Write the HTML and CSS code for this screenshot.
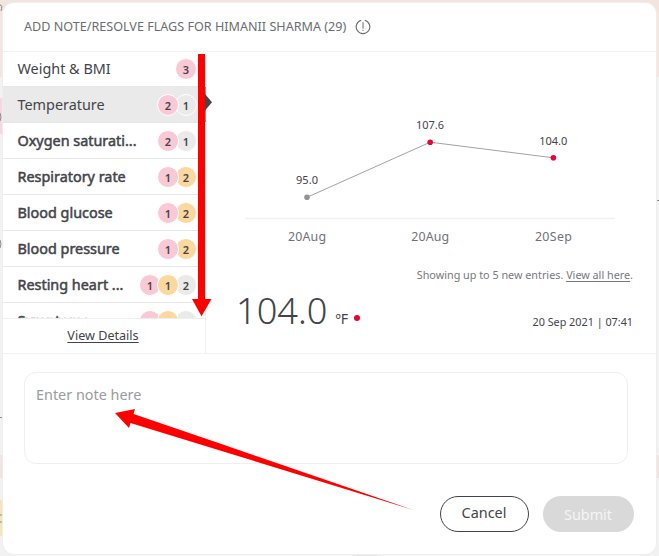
FILE: index.html
```html
<!DOCTYPE html>
<html lang="en">
<head>
<meta charset="utf-8">
<title>Add note</title>
<link rel="stylesheet" href="styles.css">
</head>
<body>
<svg class="backdrop" width="659" height="556" aria-hidden="true">
  <rect width="659" height="556" fill="#f2f2f2"/>
  <path d="M0 0H659V77H654V20H4V77H0Z" fill="#f4e4df"/>
  <path d="M0 98h3v36H0z" fill="#f9d5de"/>
  <path d="M0 455h3v23H0zM656 455h3v23h-3z" fill="#eee4e1"/>
  <path d="M0 500h3v36H0z" fill="#f7e2bd"/>
  <path d="M0 5q3 0 1 6M0 113q2 4 0 8M0 240q2 4 0 8M0 417.5h2M657 200.5h2M0 515h2M0 522h2" fill="none" stroke="#888" />
  <path d="M353 555h24v1h-24z" fill="#e8e8e8"/>
</svg>
<main class="modal">
  <header class="head">
    <h1 class="title">ADD NOTE/RESOLVE FLAGS FOR HIMANII SHARMA (29)</h1>
    <svg class="info" width="16" height="16" viewBox="0 0 16 16"><path d="M6.2 1.3A6.8 6.8 0 1 0 9.8 1.3" fill="none" stroke="#66686b" stroke-width="1.1"/><path d="M8 3.2v6.6M8 10.8v1.2" stroke="#77797c" stroke-width="1.1"/></svg>
  </header>
  <section class="body">
    <nav class="side">
      <ul class="list">
        <li class="row"><span class="name">Weight &amp; BMI</span><span class="badge pink">3</span></li>
        <li class="row active"><span class="name">Temperature</span><span class="badge pink">2</span><span class="badge gray">1</span></li>
        <li class="row unread"><span class="name">Oxygen saturati...</span><span class="badge pink">2</span><span class="badge gray">1</span></li>
        <li class="row unread"><span class="name">Respiratory rate</span><span class="badge pink">1</span><span class="badge amber">2</span></li>
        <li class="row unread"><span class="name">Blood glucose</span><span class="badge pink">1</span><span class="badge amber">2</span></li>
        <li class="row unread"><span class="name">Blood pressure</span><span class="badge pink">1</span><span class="badge amber">2</span></li>
        <li class="row unread"><span class="name">Resting heart ...</span><span class="badge pink">1</span><span class="badge amber">1</span><span class="badge gray">2</span></li>
        <li class="row unread"><span class="name">Symptoms</span><span class="badge pink"></span><span class="badge amber"></span><span class="badge gray"></span></li>
      </ul>
      <div class="details"><a>View Details</a></div>
    </nav>
    <div class="panel">
      <svg class="chart" width="450" height="206" viewBox="206 52 450 206">
        <path d="M245 218.5H615" stroke="#f0f0f0" stroke-width="1.3"/>
        <path d="M307 197.3L430.2 142.2L553.4 157.8" fill="none" stroke="#a2a2a5" stroke-width="1"/>
        <circle cx="307" cy="197.3" r="2.8" fill="#929499"/>
        <circle cx="430.2" cy="142.2" r="2.8" fill="#eb0037"/>
        <circle cx="553.4" cy="157.8" r="2.8" fill="#eb0037"/>
        <g class="value"><text x="307" y="184" textLength="22">95.0</text><text x="430" y="129" textLength="28">107.6</text><text x="553.2" y="145" textLength="28">104.0</text></g>
        <g class="axis"><text x="307" y="241" textLength="38">20Aug</text><text x="430.2" y="241" textLength="38">20Aug</text><text x="553.4" y="241" textLength="37">20Sep</text></g>
      </svg>
      <p class="hint">Showing up to 5 new entries. <a>View all here</a>.</p>
      <div class="reading">
        <span class="number">104.0</span><span class="unit">ºF</span><i class="dot"></i>
        <time class="time">20 Sep 2021 | 07:41</time>
      </div>
    </div>
  </section>
  <section class="foot">
    <div class="note">Enter note here</div>
    <div class="actions"><button class="btn cancel">Cancel</button><button class="btn submit">Submit</button></div>
  </section>
</main>
<svg class="marks" width="659" height="556" aria-hidden="true">
  <path d="M205.5 87V122" stroke="#909194"/>
  <path d="M205 94L212 102.3L205 110.5Z" fill="#434547"/>
  <path d="M198 54H205V299H211.5L201.5 316.3L192 299H198Z" fill="#f00"/>
  <path d="M115 413L135 409L133.5 414L220 443.5L414 510.2L220 450.5L130.5 423L129 428Z" fill="#f00"/>
</svg>
</body>
</html>
```
FILE: styles.css
```css
* { box-sizing: border-box; }
body {
  margin: 0;
  width: 659px;
  height: 556px;
  overflow: hidden;
  font-family: "Noto Sans", sans-serif;
  color: #434449;
  background: #f2f2f2;
}
.backdrop, .marks { position: absolute; top: 0; left: 0; }
.modal {
  position: relative;
  display: flex;
  flex-direction: column;
  width: 653px;
  height: 551px;
  margin: 3px;
  border-radius: 11px;
  background: #fff;
  box-shadow: 0 0 1px 1px #eeeeee;
  overflow: hidden;
}
.head {
  display: flex;
  align-items: center;
  gap: 9px;
  height: 49px;
  padding: 0 0 0 21px;
  border-bottom: 1px solid #f2f2f2;
}
.title { margin: 0 0 2px; font-size: 12.6px; font-weight: 400; color: #6b6d70; white-space: nowrap; }
.body { display: flex; height: 302px; border-bottom: 1px solid #f2f2f2; }
.side { display: flex; flex-direction: column; width: 203px; border-right: 1px solid #efefef; }
.list { margin: 0; padding: 0; height: 266px; overflow: hidden; list-style: none; }
.row {
  display: flex;
  align-items: center;
  height: 36px;
  padding: 0 9px 0 14.5px;
  border-bottom: 1px solid #e7e7e7;
}
.row:first-child { height: 35px; }
.row.active { background: #eaeaea; }
.name { flex: 1; font-size: 14.4px; line-height: 20px; white-space: nowrap; }
.unread .name { -webkit-text-stroke: 0.5px #434449; }
.badge {
  width: 22px;
  height: 22px;
  margin-left: -4px;
  margin-top: 1px;
  border: 1px solid #fff;
  border-radius: 50%;
  font-size: 11px;
  font-weight: 600;
  line-height: 21px;
  text-align: center;
}
.row:first-child .badge { margin-top: 0; }
.badge:last-child { margin-right: -1px; }
.badge:not(:last-child) { z-index: 1; }
.pink { background: #fac9d6; }
.gray { background: #eaeaea; }
.amber { background: #fad89f; }
.details { flex: 1; border-top: 1px solid #eee; text-align: center; font-size: 12.6px; line-height: 33px; }
a { text-decoration: underline; text-underline-offset: 2px; }
.details a { margin-right: 2px; }
.panel { display: flex; flex-direction: column; width: 450px; }
.chart { display: block; flex: none; }
.value, .axis { text-anchor: middle; }
.value { font-size: 11px; fill: #434449; }
.axis { font-size: 12.4px; fill: #707276; }
.hint { margin: 7px 23px 0 0; font-size: 10.8px; line-height: 20px; text-align: right; color: #77797c; }
.reading { display: flex; align-items: baseline; padding: 0 23px 0 30px; }
.number { font-size: 36.2px; font-weight: 300; line-height: 51px; }
.unit { margin-left: 8px; font-size: 14.2px; }
.dot { align-self: flex-start; width: 6px; height: 6px; margin: 30px 0 0 6px; border-radius: 50%; background: #eb0037; }
.time { margin-left: auto; padding-top: 29px; align-self: flex-start; font-size: 10.8px; line-height: 15px; }
.foot { padding: 18px 22.5px 0 21px; }
.note {
  width: 604px;
  height: 92px;
  padding: 11px;
  border: 1.5px solid #efefef;
  border-radius: 12px;
  font-size: 14.4px;
  line-height: 21px;
  color: #999b9f;
}
.actions { display: flex; justify-content: flex-end; gap: 14px; margin-top: 32.4px; }
.btn { height: 36px; padding: 0; border-radius: 18px; font: 14.4px "Noto Sans", sans-serif; }
.cancel { width: 89px; padding-bottom: 3px; border: 1px solid #434449; background: #fff; color: #434449; }
.submit { width: 91px; border: 0; background: #d9d9d9; color: #f5f5f5; }
```
